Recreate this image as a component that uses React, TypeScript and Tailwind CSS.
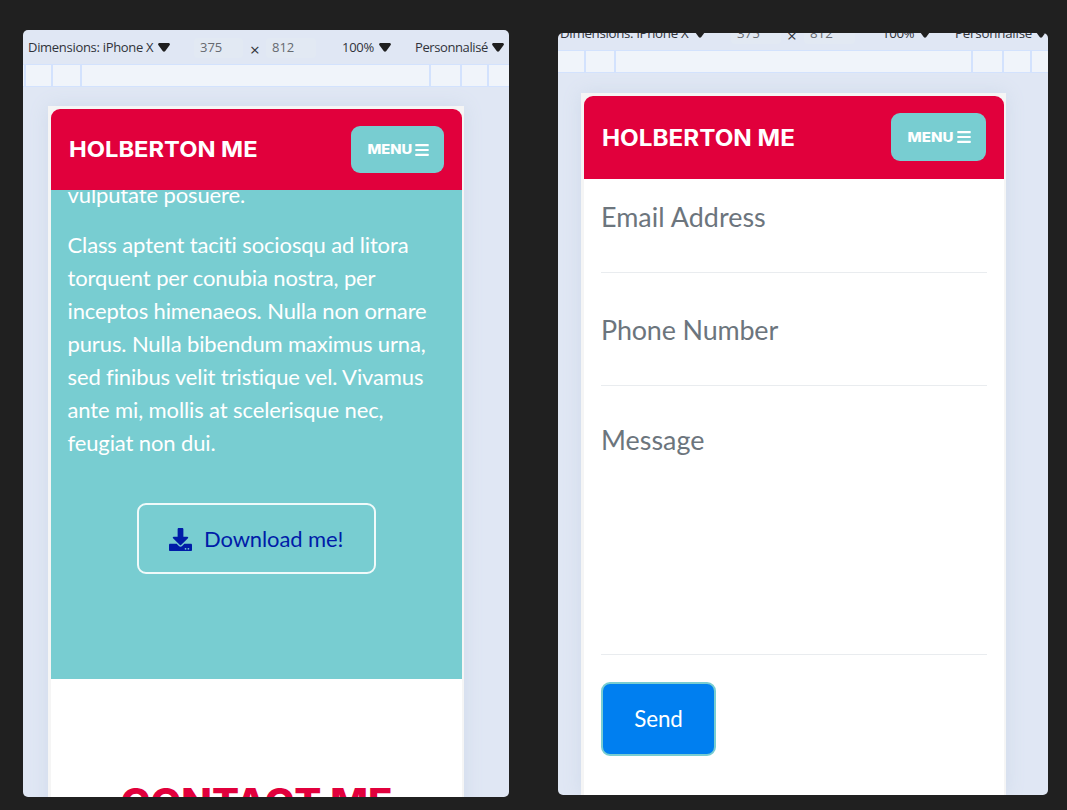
import { FaDownload } from "react-icons/fa";

const toolbarFont = "font-['Open_Sans','Noto_Sans',sans-serif]";

function Caret() {
  return (
    <svg viewBox="0 0 12 9" className="h-[9px] w-[12px] shrink-0">
      <path d="M1.2 0h9.600q1.600 .3 .9 2L7.300 8Q6 9.400 4.700 8L.3 2Q-.4 .3 1.200 0Z" fill="#1f1f1f" />
    </svg>
  );
}

function BarsIcon() {
  return (
    <svg viewBox="0 0 14 12" className="h-[12px] w-[14px] shrink-0" fill="currentColor">
      <rect x="0.300" y="0" width="13.400" height="2.200" rx="0.500" />
      <rect x="0.300" y="4.900" width="13.400" height="2.200" rx="0.500" />
      <rect x="0.300" y="9.800" width="13.400" height="2.200" rx="0.500" />
    </svg>
  );
}

const paragraph = [
  "Class aptent taciti sociosqu ad litora",
  "torquent per conubia nostra, per",
  "inceptos himenaeos. Nulla non ornare",
  "purus. Nulla bibendum maximus urna,",
  "sed finibus velit tristique vel. Vivamus",
  "ante mi, mollis at scelerisque nec,",
  "feugiat non dui.",
];

function AboutPreview() {
  return (
    <section className="flex h-[767px] w-[486px] shrink-0 flex-col overflow-hidden rounded-[5px] bg-[#e0e7f4]">
      <div className={`flex h-[34px] shrink-0 items-center whitespace-nowrap pt-px text-[13px] text-[#30333a] ${toolbarFont}`}>
        <span className="ml-[5px] w-[130px] tracking-[-0.300px]">Dimensions: iPhone X</span>
        <Caret />
        <span className="ml-[24px] flex h-5 w-[49px] items-center rounded bg-[#e2e9f3] pl-[6px] text-[#666a70]">375</span>
        <span className="ml-[7px] w-[16px] pt-[3px] text-[17px] leading-none">×</span>
        <span className="flex h-5 w-[50px] items-center rounded bg-[#e2e9f3] pl-[6px] text-[#666a70]">812</span>
        <span className="ml-[26px] w-[37px] tracking-[-0.300px]">100%</span>
        <Caret />
        <span className="ml-[24px] w-[77px] tracking-[-0.400px]">Personnalisé</span>
        <Caret />
      </div>
      <div className="flex h-[23px] shrink-0 border-y border-[#d3e2fd] bg-[#f0f4fa]">
        <i className="w-[3px] border-r-2 border-[#d3e2fd]" />
        <i className="w-[27px] border-r-2 border-[#d3e2fd]" />
        <i className="w-[29px] border-r-2 border-[#d3e2fd]" />
        <i className="w-[349px] border-r-2 border-[#d3e2fd]" />
        <i className="w-[31px] border-r-2 border-[#d3e2fd]" />
        <i className="w-[27px] border-r-2 border-[#d3e2fd]" />
      </div>
      <div className="ml-[25px] mt-[19px] w-[416px] flex-1 bg-[#f5f5f5] px-[3px] pt-[3px] shadow-[0_0_18px_#cfdaea]">
        <div className="flex h-full w-[411px] flex-col overflow-hidden rounded-t-[9px] bg-white">
          <nav className="relative flex h-[81px] shrink-0 items-center justify-between bg-[#e1003c] px-[18px] font-[Inter,sans-serif] font-bold text-white">
            <span className="origin-left scale-x-[1.078] whitespace-nowrap text-[22px]">HOLBERTON ME</span>
            <button className="flex h-[47px] w-[93px] items-center gap-[6px] rounded-[9px] bg-[#78cdd1] pl-[16px] text-[13.500px] font-extrabold">
              <span className="w-[42px] origin-left scale-x-[1.090]">MENU</span>
              <BarsIcon />
            </button>
          </nav>
          <div className="h-[489px] shrink-0 bg-[#78cdd1] pl-[16.500px] font-[Lato,sans-serif] text-[22px] leading-[32.880px] tracking-[-0.120px] text-white">
            <p className="-mt-[11px]">vulputate posuere.</p>
            <p className="mt-[17.500px]">
              {paragraph.map((line) => (
                <span key={line} className="block whitespace-nowrap">{line}</span>
              ))}
            </p>
            <button className="ml-[69.500px] mt-[43.500px] flex h-[71px] w-[239px] items-center gap-[12px] rounded-[9px] border-2 border-[#f0fafa] pl-[30px] pt-[2px] text-[#001ca8]">
              <FaDownload className="mb-px size-[23px] shrink-0" />
              <span>Download me!</span>
            </button>
          </div>
          <h2 className="mt-[101px] scale-x-[1.054] whitespace-nowrap text-center font-[Inter,sans-serif] text-[38px] leading-[44px] font-extrabold text-[#e1003c]">CONTACT ME</h2>
        </div>
      </div>
    </section>
  );
}

function ContactPreview() {
  return (
    <section className="mt-[3px] flex h-[762px] w-[490px] shrink-0 flex-col overflow-hidden rounded-[5px] bg-[#e0e7f4]">
      <div className={`-mt-[17px] flex h-[34px] shrink-0 items-center whitespace-nowrap pt-px text-[13.300px] text-[#30333a] ${toolbarFont}`}>
        <span className="ml-[2px] w-[134px] tracking-[-0.300px]">Dimensions: iPhone X</span>
        <Caret />
        <span className="ml-[25px] flex h-5 w-[50px] items-center rounded bg-[#e2e9f3] pl-[6px] text-[#666a70]">375</span>
        <span className="ml-[6px] w-[17px] pt-[3px] text-[17px] leading-none">×</span>
        <span className="flex h-5 w-[51px] items-center rounded bg-[#e2e9f3] pl-[6px] text-[#666a70]">812</span>
        <span className="ml-[27px] w-[37px] tracking-[-0.400px]">100%</span>
        <Caret />
        <span className="ml-[24px] w-[80px] tracking-[-0.200px]">Personnalisé</span>
        <Caret />
      </div>
      <div className="flex h-[23px] shrink-0 border-y border-[#d3e2fd] bg-[#f0f4fa]">
        <i className="w-[28px] border-r-2 border-[#d3e2fd]" />
        <i className="w-[30px] border-r-2 border-[#d3e2fd]" />
        <i className="w-[357px] border-r-2 border-[#d3e2fd]" />
        <i className="w-[31px] border-r-2 border-[#d3e2fd]" />
        <i className="w-[28px] border-r-2 border-[#d3e2fd]" />
      </div>
      <div className="ml-[23px] mt-[20px] w-[425px] flex-1 bg-[#f5f5f5] px-[3px] pt-[3px] shadow-[0_0_18px_#cfdaea]">
        <div className="flex h-full w-[420px] flex-col overflow-hidden rounded-t-[9px] bg-white">
          <nav className="flex h-[83px] shrink-0 items-center justify-between bg-[#e1003c] px-[18px] font-[Inter,sans-serif] font-bold text-white">
            <span className="origin-left scale-x-[1.078] whitespace-nowrap text-[22.500px]">HOLBERTON ME</span>
            <button className="mb-px flex h-[48px] w-[95px] items-center gap-[7px] rounded-[9px] bg-[#78cdd1] pl-[16px] text-[13.800px] font-extrabold">
              <span className="w-[43px] origin-left scale-x-[1.090]">MENU</span>
              <BarsIcon />
            </button>
          </nav>
          <form className="flex flex-col px-[17px] font-[Lato,sans-serif] text-[26.900px] leading-[40px] text-[#6c757d]">
            <label className="h-[94px] border-b border-[#e9ecef] pt-[18px] tracking-[0.050px]">Email Address</label>
            <label className="h-[113px] border-b border-[#e9ecef] pt-[37px] tracking-[-0.150px]">Phone Number</label>
            <label className="h-[269px] border-b border-[#e9ecef] pt-[34px]">Message</label>
            <button type="button" className="mt-[27px] h-[74px] w-[115px] rounded-[9px] border-2 border-[#78cdd1] bg-[#007ff0] text-[22.400px] tracking-[-0.100px] text-white">
              Send
            </button>
          </form>
        </div>
      </div>
    </section>
  );
}

export default function App() {
  return (
    <main className="flex h-[810px] w-[1067px] gap-[49px] overflow-hidden bg-[#202020] pl-[23px] pt-[30px]">
      <AboutPreview />
      <ContactPreview />
    </main>
  );
}
